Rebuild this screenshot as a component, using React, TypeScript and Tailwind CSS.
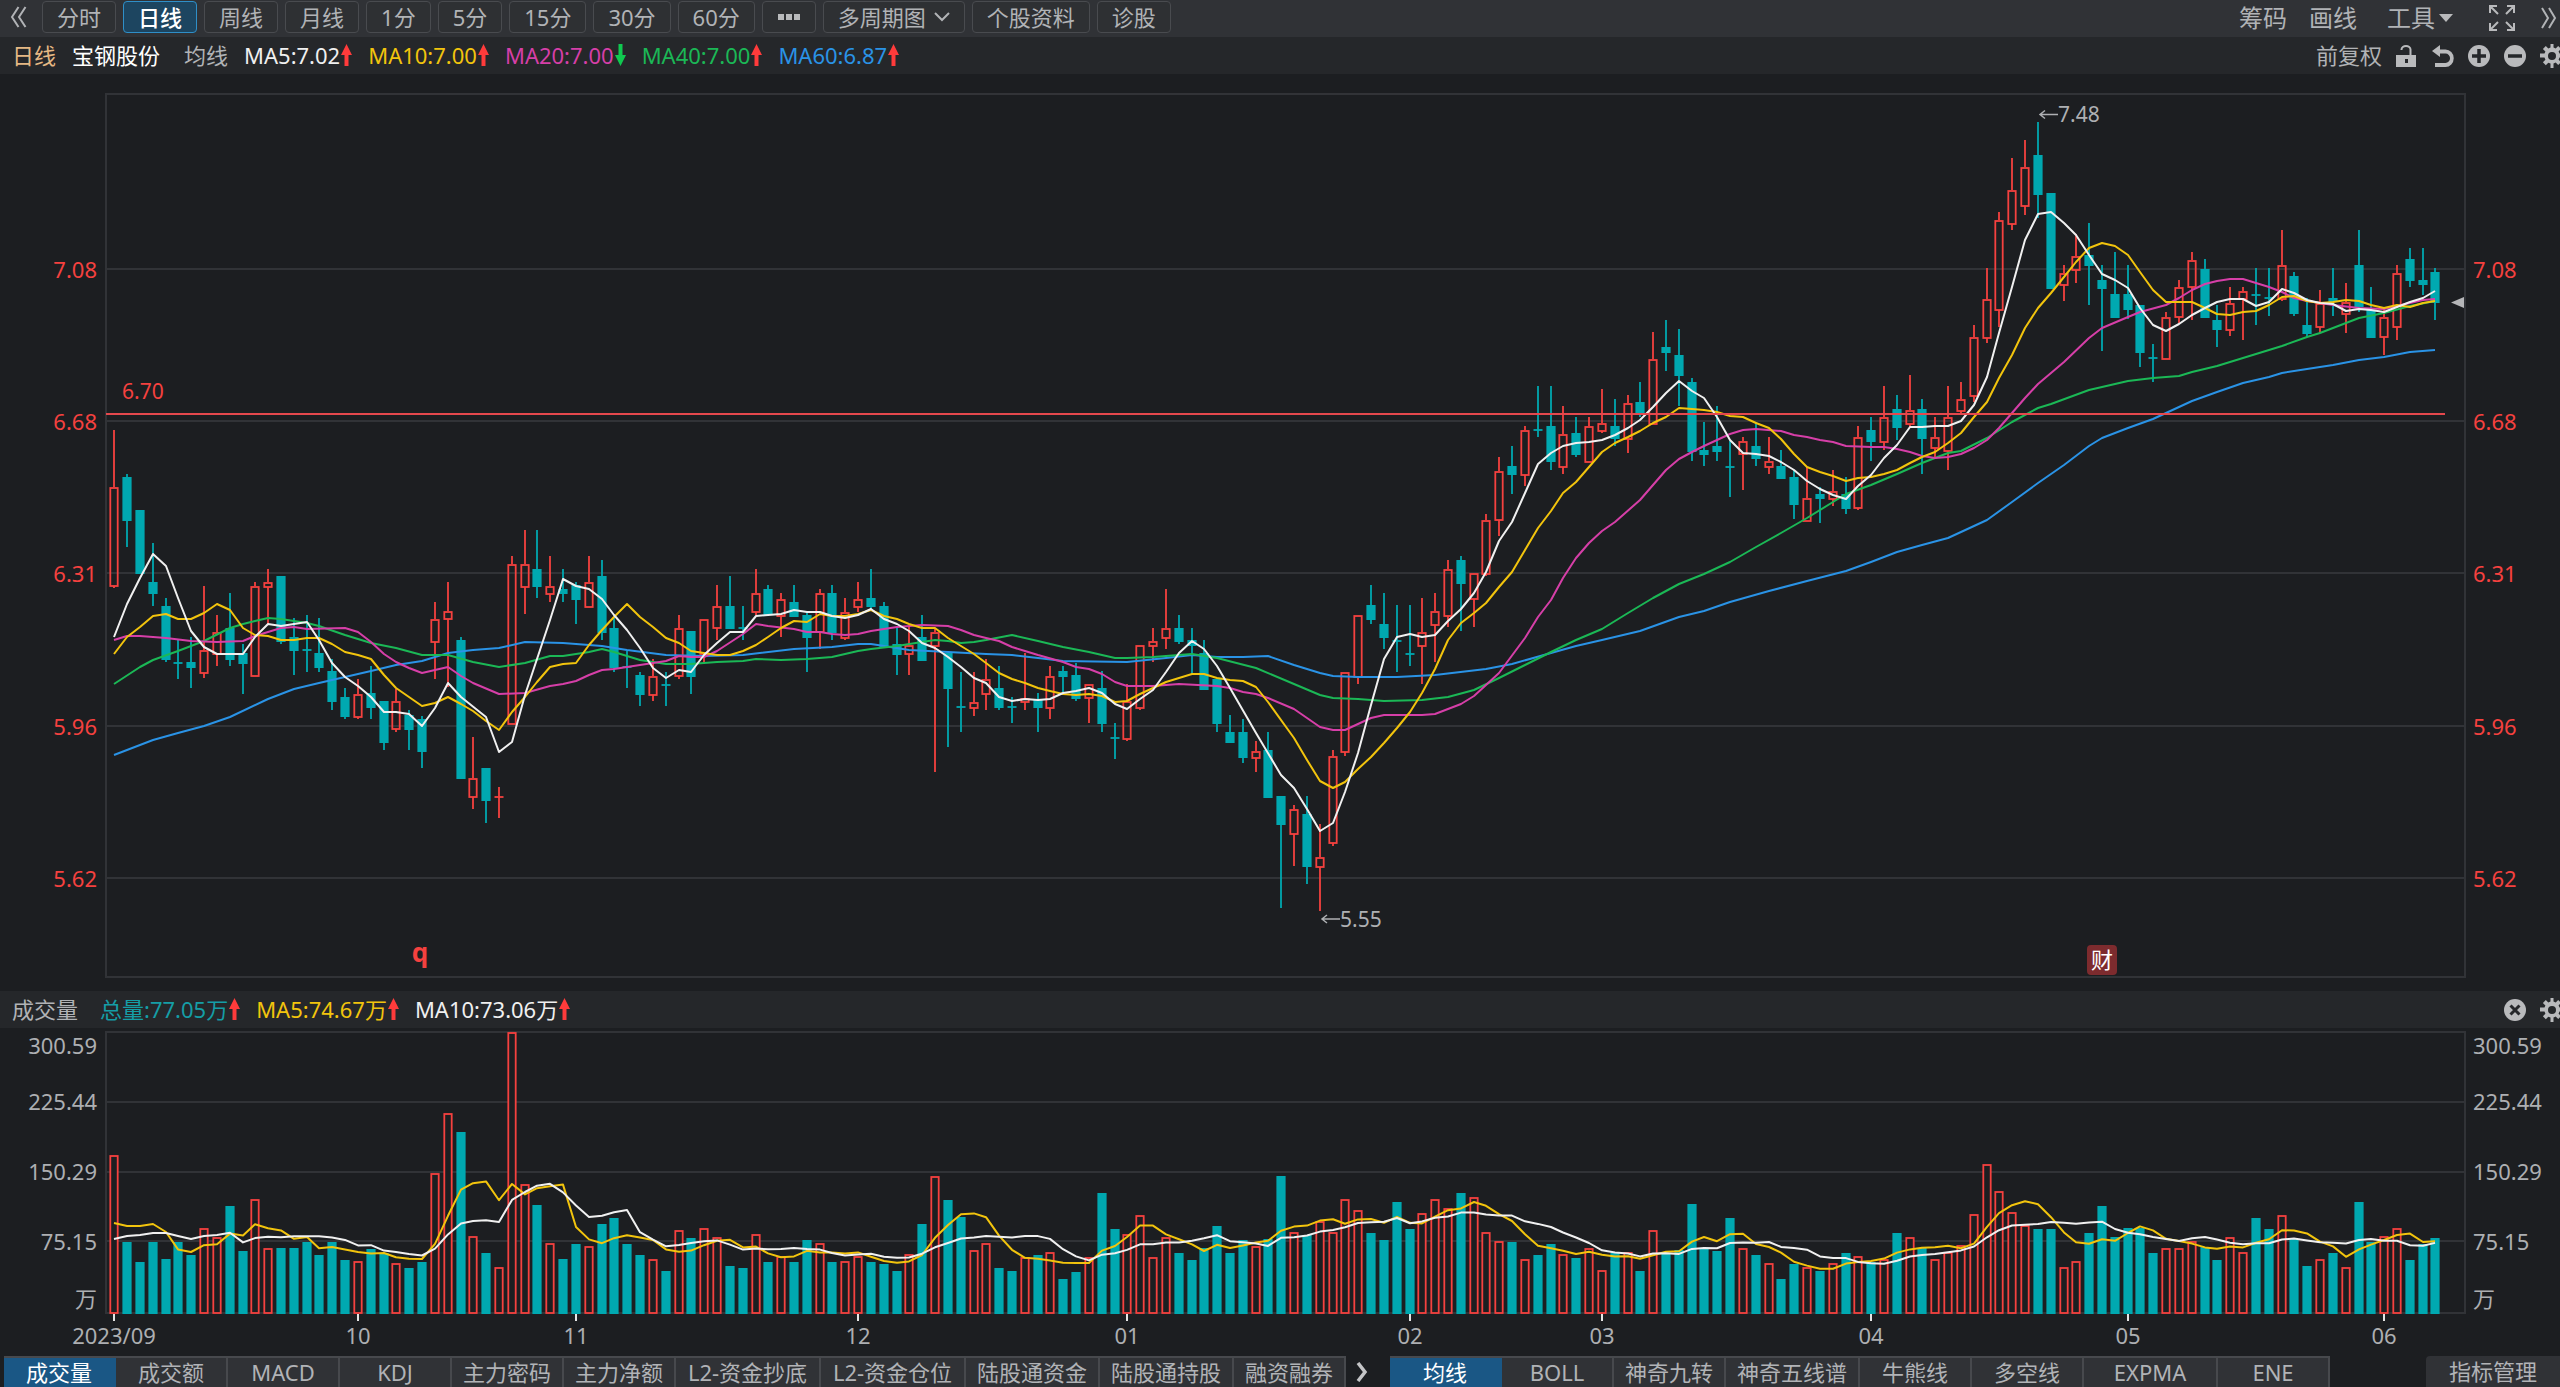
import { ReactNode } from "react";

const STEP = 12.824;
const FIRST_X = 114.3;
const RED = "#f5413f";
const TEAL = "#00a8b0";
const GRID = "#313337";
const VOLUME_BASE = 1313;

// one candle per entry: direction, high, body top, body bottom, low
const CANDLES = `
r 430 487 586 588,t 474 477 521 547,t 510 510 574 574,t 543 582 594 606,t 598 606 660 662,t 640 663 663 679,t 637 662 668 688,
r 586 650 673 678,r 615 632 654 666,t 593 628 660 666,t 644 653 664 694,r 582 586 676 676,r 569 582 587 625,t 576 576 642 644,
t 618 637 651 675,t 615 650 650 672,t 618 653 668 672,t 659 671 702 710,t 688 697 717 719,r 679 694 717 719,t 666 693 708 719,
t 701 701 743 750,r 689 701 729 732,t 710 715 730 750,t 716 719 752 768,r 602 619 642 679,r 582 611 619 687,t 637 640 779 779,
r 737 778 797 809,t 768 768 801 823,r 787 797 797 818,r 556 564 724 724,r 530 564 587 614,t 530 569 587 598,r 556 586 594 602,
t 569 589 594 602,t 582 585 600 624,r 556 582 607 607,t 560 576 633 640,t 617 628 668 672,t 651 667 667 688,t 672 675 695 706,
r 659 676 695 701,t 672 685 685 706,r 615 628 676 679,t 631 631 677 694,r 619 619 654 662,r 585 606 628 640,t 576 606 629 629,
t 606 628 628 640,r 569 593 612 615,t 585 589 615 615,r 593 599 616 637,t 585 602 617 617,t 612 615 638 672,r 589 593 632 649,
t 585 593 633 640,r 598 612 638 640,r 582 599 607 612,t 569 598 607 610,t 602 606 647 647,t 628 644 655 675,r 627 645 654 675,
t 615 637 661 661,r 629 632 646 772,t 653 653 689 747,t 672 707 707 732,r 672 702 708 716,r 659 679 694 710,t 666 688 708 710,
t 697 707 707 723,r 653 698 702 710,t 693 700 708 732,r 666 676 708 719,t 666 671 677 692,t 663 675 699 701,r 684 684 698 723,
t 671 688 724 732,t 723 738 738 759,r 684 701 739 741,r 645 645 708 710,r 628 641 646 662,r 589 628 638 649,t 615 628 642 644,
t 628 640 646 674,t 640 653 690 690,t 679 679 724 732,t 715 732 743 743,t 719 732 758 763,r 741 751 758 772,t 732 750 798 798,
t 796 796 825 908,r 805 809 834 866,t 796 814 867 884,r 824 857 867 911,r 750 756 843 846,r 672 672 752 756,r 615 615 677 684,
t 585 605 620 624,t 593 624 638 649,t 605 641 641 672,t 605 654 654 666,r 598 632 646 684,r 593 611 625 662,r 560 569 616 627,
t 556 560 584 631,r 573 573 599 627,r 514 520 574 576,r 457 471 520 536,t 446 466 475 494,r 426 430 475 486,t 386 430 430 437,
t 386 426 462 470,r 406 434 467 474,t 417 433 455 457,r 417 426 462 462,r 389 423 431 433,t 399 426 439 446,r 395 403 439 453,
t 382 402 414 417,r 332 359 424 424,t 320 347 353 371,t 329 355 376 406,t 378 382 452 461,t 422 450 455 466,t 406 446 452 461,
t 441 467 467 497,r 437 441 454 490,t 422 446 459 466,r 437 461 467 474,t 450 466 479 479,t 470 477 505 519,r 467 498 521 521,
t 487 494 499 523,r 470 491 499 506,t 477 494 509 514,r 426 437 508 510,t 417 430 442 461,r 386 417 442 450,t 395 409 428 440,
r 375 410 424 428,t 399 409 439 474,r 417 437 448 457,r 386 417 451 470,r 382 399 411 415,r 325 337 396 402,r 268 299 338 343,
r 212 220 310 327,r 158 190 224 230,r 140 167 206 215,t 122 155 195 218,t 193 193 289 289,r 265 273 285 301,r 234 256 270 283,
t 223 255 266 305,t 265 280 289 351,t 252 294 318 318,t 265 294 310 319,t 305 305 353 367,t 344 358 358 382,r 312 317 359 359,
r 280 287 317 323,r 252 260 287 320,t 259 269 318 318,t 305 320 330 347,r 287 303 330 336,r 287 291 299 340,t 268 295 295 325,
t 268 298 298 316,r 230 265 299 301,t 272 276 314 316,t 298 325 334 337,r 290 303 327 333,t 268 298 302 316,r 283 302 314 333,
t 230 265 307 312,t 287 310 338 338,r 307 317 337 355,r 265 273 327 340,t 248 259 281 287,t 248 280 285 295,t 268 272 303 320`
  .split(",")
  .map((row) => {
    const [dir, ...levels] = row.trim().split(" ");
    const [high, top, bottom, low] = levels.map(Number);
    return { up: dir === "r", high, top, bottom, low };
  });

const VOLUMES = [
  1155, 1242, 1262, 1242, 1259, 1242, 1255, 1228, 1237, 1206, 1251, 1199, 1248, 1248, 1248, 1242, 1255, 1242, 1260, 1261,
  1249, 1253, 1263, 1268, 1262, 1173, 1113, 1132, 1236, 1253, 1267, 1032, 1184, 1205, 1243, 1259, 1244, 1246, 1224, 1218,
  1244, 1255, 1259, 1271, 1230, 1238, 1228, 1237, 1266, 1268, 1234, 1262, 1256, 1262, 1240, 1243, 1262, 1261, 1256, 1262,
  1264, 1271, 1254, 1224, 1176, 1200, 1217, 1250, 1243, 1268, 1271, 1257, 1255, 1252, 1279, 1272, 1257, 1193, 1229, 1234,
  1215, 1257, 1237, 1253, 1260, 1248, 1226, 1253, 1240, 1246, 1239, 1176, 1232, 1235, 1221, 1232, 1199, 1210, 1233, 1240,
  1202, 1229, 1213, 1199, 1208, 1193, 1197, 1232, 1241, 1242, 1259, 1255, 1244, 1254, 1258, 1248, 1270, 1253, 1252, 1271,
  1230, 1253, 1250, 1204, 1248, 1251, 1218, 1248, 1255, 1263, 1279, 1264, 1267, 1271, 1263, 1253, 1256, 1262, 1259, 1233,
  1237, 1248, 1259, 1252, 1245, 1214, 1164, 1191, 1212, 1225, 1229, 1229, 1267, 1261, 1233, 1206, 1237, 1228, 1228, 1253,
  1248, 1248, 1241, 1247, 1260, 1237, 1252, 1218, 1229, 1215, 1239, 1266, 1259, 1253, 1267, 1202, 1242, 1236, 1228, 1260,
  1244, 1238,
];

// moving averages as "candle index:level"
const MA5 =
  "0:637 1:604 2:578 3:554 4:566 5:598 6:631 7:647 8:654 10:654 11:637 12:624 13:626 14:624 15:622 16:640 17:663 18:677 19:686 20:697 21:712 22:712 23:714 24:726 25:708 26:683 27:697 29:717 30:752 31:742 32:695 34:620 35:579 36:586 37:589 38:599 39:615 40:630 41:648 42:668 43:678 44:670 45:672 46:655 47:643 48:632 49:632 50:616 51:615 52:614 53:610 54:612 55:612 56:616 57:618 58:615 59:609 60:619 61:624 62:631 63:643 64:648 65:657 66:667 67:678 68:683 69:697 70:701 71:699 72:700 73:699 74:693 75:691 76:688 77:693 78:704 79:709 80:699 81:690 82:672 83:653 84:641 85:649 86:666 87:688 89:733 91:775 92:788 93:809 94:831 95:823 96:792 97:753 98:705 99:659 100:637 101:634 102:637 103:635 104:621 105:609 106:593 107:572 108:541 109:522 110:493 111:464 112:453 113:446 114:443 115:442 116:440 117:435 118:428 119:420 120:407 121:393 122:381 123:391 124:398 125:417 126:440 127:453 128:454 129:456 130:462 131:470 132:481 133:489 134:495 135:499 136:486 137:475 138:458 139:445 140:427 141:427 142:426 143:426 144:421 145:405 146:377 147:333 148:287 149:240 150:214 151:212 152:223 153:235 154:255 155:274 156:280 157:288 158:308 159:325 160:331 161:324 162:315 163:308 164:302 165:299 166:299 167:306 168:302 169:289 170:293 171:300 172:303 173:304 174:311 175:309 176:310 177:312 178:307 179:302 180:298 181:291";
const MA10 =
  "0:654 1:637 2:627 3:616 4:614 5:619 6:619 7:613 8:604 9:610 10:628 11:635 12:636 13:640 14:640 15:638 16:638 17:644 18:652 19:655 20:659 21:675 22:688 23:697 24:706 25:703 26:697 27:704 28:711 29:721 30:730 31:712 32:697 33:682 34:667 35:664 36:663 37:645 38:630 39:617 40:604 41:617 42:627 43:638 44:643 45:651 46:653 47:655 48:655 49:651 50:645 51:637 52:628 53:621 54:622 55:614 56:616 57:616 58:614 59:610 60:616 61:619 62:624 63:628 64:628 65:638 66:646 67:654 68:663 69:673 70:679 71:683 72:688 73:691 74:694 75:695 76:694 77:696 78:702 79:701 80:694 81:688 82:682 83:678 84:674 85:674 86:678 87:680 88:681 89:687 90:702 92:738 93:760 94:781 95:788 96:782 97:769 98:757 99:743 100:728 101:712 102:693 103:669 104:640 105:623 106:613 107:603 108:587 109:572 110:550 111:528 112:511 113:493 114:482 115:467 116:452 117:443 118:437 119:431 120:423 121:417 122:408 123:409 124:410 125:412 126:416 127:417 128:423 129:428 130:439 131:454 132:467 133:472 134:476 135:481 136:478 137:477 138:474 139:470 140:463 141:457 142:452 143:443 144:433 145:417 146:402 147:378 148:355 149:328 150:308 151:293 152:277 153:262 154:248 155:243 156:246 157:255 158:272 159:290 160:302 161:302 162:302 163:308 164:314 165:315 166:312 167:311 168:305 169:297 170:296 171:301 172:303 173:302 174:300 175:301 176:305 177:308 178:305 179:307 180:303 181:301";
const MA20 =
  "0:640 1:636 2:636 3:637 4:638 6:641 8:642 10:641 11:636 12:632 13:628 14:627 15:629 18:628 19:632 20:642 21:654 22:662 23:668 24:673 25:670 26:667 27:676 28:683 30:694 32:693 34:686 35:684 36:681 37:675 38:670 39:669 41:665 43:661 44:656 45:657 46:657 47:651 49:634 50:624 51:626 53:629 54:632 55:632 56:634 57:635 58:634 59:631 61:627 63:625 65:626 66:630 67:635 68:638 69:641 70:647 71:651 72:655 74:662 75:667 76:669 77:674 78:682 79:686 81:686 83:684 86:686 87:688 88:692 89:694 90:698 92:709 94:727 95:730 96:730 97:724 98:718 99:715 102:715 103:714 104:709 105:704 106:696 107:685 108:673 110:638 111:617 112:600 113:578 114:558 115:543 116:531 117:522 119:500 121:470 122:459 123:452 124:446 125:440 126:434 127:430 128:429 130:431 131:435 132:437 133:440 134:442 135:446 137:447 138:447 139:449 140:452 141:456 142:458 143:457 144:454 145:448 146:440 147:428 148:413 149:398 150:384 152:362 154:338 155:328 157:317 158:312 160:305 161:298 162:290 163:284 164:281 165:279 166:279 167:283 168:287 169:292 170:298 171:301 173:305 175:308 177:309 178:306 179:303 180:300 181:299";
const MA40 =
  "0:684 2:667 3:660 5:651 7:641 9:628 10:624 11:621 12:618 13:619 15:623 16:626 18:635 20:643 22:648 24:655 26:655 28:662 30:667 32:663 34:656 35:656 37:652 38:649 39:652 41:660 43:664 45:664 47:662 49:661 50:659 52:660 54:659 56:657 58:651 59:649 61:646 63:642 64:640 65:641 66:643 67:642 68:640 70:635 72:641 74:647 76:652 78:658 79:658 81:657 83:655 84:654 86:658 89:668 92:684 94:695 95:698 97:699 99:701 102:700 104:697 106:690 108:678 110:665 112:652 114:640 116:629 118:613 120:598 122:584 124:574 126:562 128:547 130:533 132:518 134:502 135:494 137:485 139:474 141:463 143:453 144:451 146:438 148:422 150:408 151:404 154:390 155:387 157:381 159:378 161:376 162:372 164:366 166:358 168:350 169:346 171:337 172:333 175:318 177:313 179:306 181:301";
const MA60 =
  "0:755 3:740 5:733 7:726 9:717 12:699 14:689 16:683 18:677 20:671 22:665 24:661 26:653 28:650 30:648 32:642 35:643 38:646 40:650 43:655 46:656 49:655 53:649 56:647 58:644 59:644 60:646 62:650 65:652 68:654 70:655 72:658 74:661 79:662 82:658 84:655 86:657 88:657 90:656 92:665 94:673 95:676 97:677 100:677 103:675 107:669 109:664 112:653 114:646 116:640 119:631 122:617 124:611 126:602 129:591 132:581 135:571 137:562 139:552 141:545 143:538 144:532 146:520 148:502 150:483 152:465 154:446 155:438 157:428 159:419 160:413 162:401 164:392 166:383 168:377 169:373 171:369 173:365 175:360 177:357 179:352 181:350";

const PRICE_TICKS = [
  { label: "7.08", y: 269 },
  { label: "6.68", y: 421 },
  { label: "6.31", y: 573 },
  { label: "5.96", y: 726 },
  { label: "5.62", y: 878 },
];

const VOLUME_TICKS = [
  { label: "300.59", y: 1046 },
  { label: "225.44", y: 1102 },
  { label: "150.29", y: 1172 },
  { label: "75.15", y: 1242 },
  { label: "万", y: 1299 },
];

const MONTHS = [
  { label: "2023/09", index: 0 },
  { label: "10", index: 19 },
  { label: "11", index: 36 },
  { label: "12", index: 58 },
  { label: "01", index: 79 },
  { label: "02", index: 101 },
  { label: "03", index: 116 },
  { label: "04", index: 137 },
  { label: "05", index: 157 },
  { label: "06", index: 177 },
];

const PERIODS = ["分时", "日线", "周线", "月线", "1分", "5分", "15分", "30分", "60分"];

const SUB_INDICATORS = [
  { label: "成交量", width: "w-28" },
  { label: "成交额", width: "w-28" },
  { label: "MACD", width: "w-28" },
  { label: "KDJ", width: "w-28" },
  { label: "主力密码", width: "w-28" },
  { label: "主力净额", width: "w-28" },
  { label: "L2-资金抄底", width: "w-[145px]" },
  { label: "L2-资金仓位", width: "w-[145px]" },
  { label: "陆股通资金", width: "w-[134px]" },
  { label: "陆股通持股", width: "w-[134px]" },
  { label: "融资融券", width: "w-28" },
];

const MAIN_INDICATORS = [
  { label: "均线", width: "w-28" },
  { label: "BOLL", width: "w-28" },
  { label: "神奇九转", width: "w-28" },
  { label: "神奇五线谱", width: "w-[134px]" },
  { label: "牛熊线", width: "w-28" },
  { label: "多空线", width: "w-28" },
  { label: "EXPMA", width: "w-[134px]" },
  { label: "ENE", width: "w-28" },
];

const xOf = (index: number) => Math.round(FIRST_X + STEP * index);

function toPoints(series: string) {
  return series
    .split(" ")
    .map((pair) => {
      const [index, y] = pair.split(":").map(Number);
      return `${xOf(index)},${y}`;
    })
    .join(" ");
}

// lead holds the first levels, whose window starts before the visible range
function averagePoints(size: number, lead: number[]) {
  return VOLUMES.map((_, i) => {
    const window = VOLUMES.slice(i - size + 1, i + 1);
    const y = i < lead.length ? lead[i] : window.reduce((sum, v) => sum + v, 0) / size;
    return `${xOf(i)},${y.toFixed(1)}`;
  }).join(" ");
}

function Line({ points, color }: { points: string; color: string }) {
  return <polyline points={points} fill="none" stroke={color} strokeWidth="2" strokeLinejoin="round" />;
}

function PriceChart() {
  return (
    <svg viewBox="0 74 2560 917" className="block w-full" role="img" aria-label="宝钢股份 日线">
      <rect x="106" y="94" width="2359" height="883" fill="none" stroke={GRID} strokeWidth="2" />
      {PRICE_TICKS.map((tick) => (
        <g key={tick.label} fill={RED} fontSize="22">
          <line x1="107" x2="2464" y1={tick.y} y2={tick.y} stroke={GRID} strokeWidth="2" />
          <text x="97" y={tick.y + 9} textAnchor="end">{tick.label}</text>
          <text x="2473" y={tick.y + 9}>{tick.label}</text>
        </g>
      ))}
      {CANDLES.map((c, i) => {
        const x = xOf(i);
        const color = c.up ? RED : TEAL;
        const doji = c.top === c.bottom;
        return (
          <g key={i} stroke={color} strokeWidth="1.8">
            {c.high < c.top && <line x1={x} x2={x} y1={c.high} y2={c.top} />}
            {c.low > c.bottom && <line x1={x} x2={x} y1={c.bottom} y2={c.low} />}
            {doji && <line x1={x - 4.5} x2={x + 4.5} y1={c.top} y2={c.top} />}
            {!doji && c.up && <rect x={x - 3.7} y={c.top + 1} width="7.4" height={Math.max(c.bottom - c.top - 1, 3)} fill="none" />}
            {!doji && !c.up && <rect x={x - 4.6} y={c.top} width="9.2" height={c.bottom - c.top} fill={color} stroke="none" />}
          </g>
        );
      })}
      <Line points={toPoints(MA60)} color="#2a93e6" />
      <Line points={toPoints(MA40)} color="#1bb856" />
      <Line points={toPoints(MA20)} color="#d63fa8" />
      <Line points={toPoints(MA10)} color="#f2c40d" />
      <Line points={toPoints(MA5)} color="#f0f0f0" />
      <line x1="106" x2="2445" y1="414" y2="414" stroke="#e5484d" strokeWidth="2" />
      <text x="122" y="399" fill={RED} fontSize="21">6.70</text>
      <g stroke="#aeb0b3" strokeWidth="1.5" fill="none">
        <path d="M2040 114.500h18M2045 110.500l-5 4 5 4M1322 919h18M1327 915l-5 4 5 4" />
      </g>
      <g fill="#aeb0b3" fontSize="21">
        <text x="2058" y="122">7.48</text>
        <text x="1340" y="927">5.55</text>
      </g>
      <path d="M2451 302.500l13-5.500v11z" fill="#b5b6b8" />
      <text x="420" y="962" textAnchor="middle" fill={RED} fontSize="26" fontWeight="700">q</text>
      <rect x="2087" y="945" width="30" height="30" rx="4" fill="#7d2b2e" />
      <text x="2102" y="968" textAnchor="middle" fill="#fff" fontSize="22">财</text>
    </svg>
  );
}

function VolumeChart() {
  return (
    <svg viewBox="0 1028 2560 328" className="block w-full" role="img" aria-label="成交量">
      <rect x="106" y="1032" width="2359" height="281" fill="none" stroke={GRID} strokeWidth="2" />
      {[1102, 1172, 1241].map((y) => (
        <line key={y} x1="107" x2="2464" y1={y} y2={y} stroke={GRID} strokeWidth="2" />
      ))}
      {VOLUMES.map((top, i) => {
        const x = xOf(i);
        return CANDLES[i].up ? (
          <rect key={i} x={x - 3.7} y={top + 1} width="7.4" height={VOLUME_BASE - top - 1} fill="#1c1e21" stroke={RED} strokeWidth="1.8" />
        ) : (
          <rect key={i} x={x - 4.6} y={top} width="9.2" height={VOLUME_BASE - top + 1} fill={TEAL} />
        );
      })}
      <Line points={averagePoints(5, [1223, 1226, 1226, 1224])} color="#f2c40d" />
      <Line points={averagePoints(10, [1239, 1236, 1235, 1233, 1233, 1236, 1239, 1236, 1235])} color="#f0f0f0" />
      <g fill="#adafb2" fontSize="22">
        {VOLUME_TICKS.map((tick) => (
          <g key={tick.label}>
            <text x="97" y={tick.y + 8} textAnchor="end">{tick.label}</text>
            <text x="2473" y={tick.y + 8}>{tick.label}</text>
          </g>
        ))}
        {MONTHS.map((month) => (
          <g key={month.label}>
            <line x1={xOf(month.index)} x2={xOf(month.index)} y1="1314" y2="1321" stroke="#e6e6e6" strokeWidth="2" />
            <text x={xOf(month.index)} y="1344" textAnchor="middle">{month.label}</text>
          </g>
        ))}
      </g>
    </svg>
  );
}

function Arrow({ down }: { down?: boolean }) {
  return (
    <svg viewBox="0 0 11 22" className={down ? "h-[22px] w-[11px] rotate-180" : "h-[22px] w-[11px]"}>
      <path d="M5.500 0L11 11H7.500v11h-4V11H0z" fill={down ? "#10c950" : "#ff3b3b"} />
    </svg>
  );
}

function Legend({ color, down, children }: { color: string; down?: boolean; children: ReactNode }) {
  return (
    <span className={`flex items-center gap-px ${color}`}>
      {children}
      <Arrow down={down} />
    </span>
  );
}

function PeriodButton({ active, label, children }: { active?: boolean; label?: string; children: ReactNode }) {
  return (
    <button
      aria-label={label}
      className={
        active
          ? "flex h-8 items-center gap-2 rounded border border-[#2f8fc8] bg-[#1d4560] px-3.5 font-medium text-white"
          : "flex h-8 items-center gap-2 rounded border border-[#494b4f] bg-[#2e3033] px-3.5"
      }
    >
      {children}
    </button>
  );
}

function GearIcon() {
  return (
    <svg viewBox="0 0 24 24" className="size-6" fill="#b9babc">
      <path
        fillRule="evenodd"
        d="M10.500 0h3v3.500l2.200.9 2.500-2.500 2.900 2.900-2.500 2.500.9 2.200H24v4h-4.500l-.9 2.200 2.500 2.500-2.900 2.900-2.500-2.500-2.200.9V24h-3v-4.400l-2.200-.9-2.500 2.500-2.900-2.900 2.500-2.500-.9-2.200H0v-4h4.500l.9-2.200-2.500-2.500 2.900-2.900 2.500 2.500 2.200-.9zM12 8a4 4 0 100 8 4 4 0 000-8z"
      />
    </svg>
  );
}

function IconButton({ label, children }: { label: string; children: ReactNode }) {
  return (
    <button aria-label={label} className="flex shrink-0 items-center">
      {children}
    </button>
  );
}

function IndicatorTabs({ items, active }: { items: { label: string; width: string }[]; active: string }) {
  return (
    <div className="flex border-t-2 border-[#47494d]">
      {items.map((item) => (
        <button
          key={item.label}
          className={`${item.width} shrink-0 border-r-2 pb-0.5 whitespace-nowrap ${
            item.label === active ? "border-[#1a5785] bg-[#1a5785] text-white" : "border-[#47494d] bg-[#303236]"
          }`}
        >
          {item.label}
        </button>
      ))}
    </div>
  );
}

export default function App() {
  return (
    <div className="overflow-hidden bg-[#1c1e21] font-['Noto_Sans','Noto_Sans_CJK_SC',sans-serif] text-[22px] leading-7 text-[#b1b3b6]">
      <header className="flex h-[37px] items-center justify-between bg-[#303236]">
        <nav className="flex items-center gap-[7px] pb-1 pl-2.5">
          <button aria-label="收起" className="mr-2">
            <svg viewBox="0 0 17 22" className="h-[22px] w-[17px]" fill="none" stroke="#b1b3b6" strokeWidth="2">
              <path d="M8.500 1L2 11l6.500 10M15.500 1L9 11l6.500 10" />
            </svg>
          </button>
          {PERIODS.map((period) => (
            <PeriodButton key={period} active={period === "日线"}>
              {period}
            </PeriodButton>
          ))}
          <PeriodButton label="更多周期">
            <svg viewBox="0 0 24 6" className="h-1.5 w-6" fill="#b9babc">
              <path d="M1 0h6v6H1zM9 0h6v6H9zM17 0h6v6h-6z" />
            </svg>
          </PeriodButton>
          <PeriodButton>
            多周期图
            <svg viewBox="0 0 16 10" className="h-2.5 w-4" fill="none" stroke="#b1b3b6" strokeWidth="2">
              <path d="M1 1l7 7 7-7" />
            </svg>
          </PeriodButton>
          <PeriodButton>个股资料</PeriodButton>
          <PeriodButton>诊股</PeriodButton>
        </nav>
        <div className="flex items-center gap-[22px] pr-[3px] pb-0.5 text-2xl">
          <button>筹码</button>
          <button>画线</button>
          <button className="ml-2 flex items-center gap-1">
            工具
            <svg viewBox="0 0 14 8" className="h-2 w-3.5" fill="#b9babc">
              <path d="M0 0h14l-7 8z" />
            </svg>
          </button>
          <IconButton label="全屏">
            <svg viewBox="0 0 26 26" className="ml-3.5 size-[26px]" fill="none" stroke="#b9babc" strokeWidth="2">
              <path d="M1 8V1h7M1 1l8 8M18 1h7v7M25 1l-8 8M1 18v7h7M1 25l8-8M25 18v7h-7M25 25l-8-8" />
            </svg>
          </IconButton>
          <IconButton label="展开">
            <svg viewBox="0 0 16 22" className="ml-1 h-[22px] w-4" fill="none" stroke="#b1b3b6" strokeWidth="2">
              <path d="M1 1l6 10-6 10M8 1l6 10-6 10" />
            </svg>
          </IconButton>
        </div>
      </header>

      <section className="flex h-[37px] items-center justify-between bg-[#25272a]">
        <div className="flex items-center gap-4 pb-0.5 pl-3">
          <span className="text-[#e5b884]">日线</span>
          <h1 className="text-white">宝钢股份</h1>
          <span className="ml-2">均线</span>
          <Legend color="text-[#f0f0f0]">MA5:7.02</Legend>
          <Legend color="text-[#f2c40d]">MA10:7.00</Legend>
          <Legend color="text-[#d63fa8]" down>MA20:7.00</Legend>
          <Legend color="text-[#1bb856]">MA40:7.00</Legend>
          <Legend color="text-[#2a93e6]">MA60:6.87</Legend>
        </div>
        <div className="-mr-1 flex items-center gap-3.5">
          <button className="pb-0.5">前复权</button>
          <IconButton label="解锁">
            <svg viewBox="0 0 20 22" className="mr-0.5 h-[22px] w-5" fill="#b9babc">
              <path fillRule="evenodd" d="M0 10h20v12H0zM9 14v4h3v-4z" />
              <path d="M5.500 5V4.500a4.500 3.500 0 019 0V10" fill="none" stroke="#b9babc" strokeWidth="2" />
            </svg>
          </IconButton>
          <IconButton label="撤销">
            <svg viewBox="0 0 22 22" className="size-[22px]" fill="#b9babc">
              <path d="M0 6l8-6v4.500h5.500a8 8.500 0 010 17.500H3v-4h10.500a4.500 4.700 0 000-9.500H8V12z" />
            </svg>
          </IconButton>
          <IconButton label="放大">
            <svg viewBox="0 0 22 22" className="size-[22px]">
              <circle cx="11" cy="11" r="11" fill="#b9babc" />
              <path d="M4 11h14M11 4v14" stroke="#25272a" strokeWidth="3.500" />
            </svg>
          </IconButton>
          <IconButton label="缩小">
            <svg viewBox="0 0 22 22" className="size-[22px]">
              <circle cx="11" cy="11" r="11" fill="#b9babc" />
              <path d="M4 11h14" stroke="#25272a" strokeWidth="3.500" />
            </svg>
          </IconButton>
          <IconButton label="主图设置">
            <GearIcon />
          </IconButton>
        </div>
      </section>

      <PriceChart />

      <section className="flex h-[37px] items-center justify-between bg-[#25272a]">
        <div className="flex items-center gap-4 pb-0.5 pl-3">
          <h2 className="mr-1.5">成交量</h2>
          <Legend color="text-[#159ea6]">总量:77.05万</Legend>
          <Legend color="text-[#f2c40d]">MA5:74.67万</Legend>
          <Legend color="text-[#f0f0f0]">MA10:73.06万</Legend>
        </div>
        <div className="-mr-1 flex items-center gap-3.5">
          <IconButton label="关闭副图">
            <svg viewBox="0 0 22 22" className="size-[22px]">
              <circle cx="11" cy="11" r="11" fill="#b9babc" />
              <path d="M6.500 6.500l9 9M15.500 6.500l-9 9" stroke="#25272a" strokeWidth="3" />
            </svg>
          </IconButton>
          <IconButton label="副图设置">
            <GearIcon />
          </IconButton>
        </div>
      </section>

      <VolumeChart />

      <footer className="flex h-[31px] items-stretch pl-1">
        <IndicatorTabs items={SUB_INDICATORS} active="成交量" />
        <button aria-label="更多指标" className="flex w-11 items-center justify-start pl-2.5">
          <svg viewBox="0 0 12 20" className="h-5 w-3" fill="none" stroke="#c4c5c7" strokeWidth="3.500">
            <path d="M2 1l7 9-7 9" />
          </svg>
        </button>
        <IndicatorTabs items={MAIN_INDICATORS} active="均线" />
        <button className="ml-auto w-[134px] rounded-tl bg-[#303236] pb-0.5">指标管理</button>
      </footer>
    </div>
  );
}
